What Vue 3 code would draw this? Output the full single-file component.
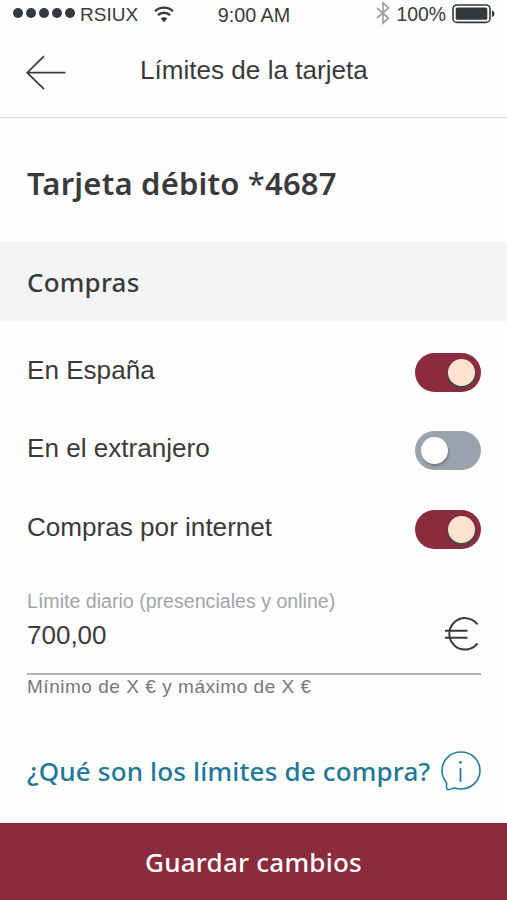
<script setup>
import { ref } from "vue";

const options = ref([
  { id: "spain", label: "En España", active: true },
  { id: "abroad", label: "En el extranjero", active: false },
  { id: "internet", label: "Compras por internet", active: true },
]);

const limit = ref("700,00");

const toggleOption = (option) => {
  option.active = !option.active;
};
</script>

<template>
  <div class="screen">
    <div class="status">
      <div class="status__left">
        <div class="status__signal">
          <span v-for="n in 5" :key="n" class="status__dot"></span>
        </div>
        <span class="status__carrier">RSIUX</span>
        <svg class="status__wifi" width="20" height="17" viewBox="0 0 20 17" fill="none">
          <path d="M1 5.2C6 .5 14 .5 19 5.2" stroke="#34373c" stroke-width="2.3" />
          <path d="M4 9.2C7.4 5.9 12.6 5.9 16 9.2" stroke="#34373c" stroke-width="2.3" />
          <path d="M6.7 12.6C8.5 10.8 11.5 10.8 13.3 12.6L10 16.3Z" fill="#34373c" />
        </svg>
      </div>
      <span class="status__time">9:00 AM</span>
      <div class="status__right">
        <svg class="status__bluetooth" width="14" height="24" viewBox="0 0 14 24" fill="none">
          <path
            d="M1 7L12.5 17L7 22V2L12.5 7L1 17"
            stroke="#a0a0a0"
            stroke-width="1.7"
          />
        </svg>
        <span class="status__percent">100%</span>
        <svg class="status__battery" width="43" height="20" viewBox="0 0 43 20" fill="none">
          <rect x="1" y="1" width="37" height="17.4" rx="4" stroke="#34373c" stroke-width="1.6" />
          <rect x="3.7" y="3.6" width="31.6" height="12.2" rx="1.5" fill="#34373c" />
          <path d="M40 6.5C43.2 7.3 43.2 12.1 40 12.9Z" fill="#34373c" />
        </svg>
      </div>
    </div>

    <header class="header">
      <svg class="header__back" width="40" height="36" viewBox="0 0 40 36" fill="none">
        <path
          d="M18 1.2L1.2 17.7L18 34.2M1.2 17.7H39.5"
          stroke="#3a3a3a"
          stroke-width="1.7"
        />
      </svg>
      <span class="header__title">Límites de la tarjeta</span>
    </header>

    <h1 class="card-title">
      <span>Tarjeta débito</span>
      <span class="card-title__star">*</span>
      <span>4687</span>
    </h1>

    <h2 class="section">Compras</h2>

    <div class="options">
      <div v-for="option in options" :key="option.id" class="option">
        <span class="option__label">{{ option.label }}</span>
        <div
          class="toggle"
          :class="{ active: option.active }"
          @click="toggleOption(option)"
        >
          <div class="toggle__knob"></div>
        </div>
      </div>
    </div>

    <div class="field">
      <div class="field__label">Límite diario (presenciales y online)</div>
      <div class="field__row">
        <span class="field__value">{{ limit }}</span>
        <svg class="field__euro" width="35" height="36" viewBox="0 0 35 36" fill="none">
          <path
            d="M32.5 8.3A15.7 15.7 0 1 0 32.5 27.3M0 14.7H22.5M0 21.7H22.5"
            stroke="#3a3a3a"
            stroke-width="2"
          />
        </svg>
      </div>
      <div class="field__hint">Mínimo de X € y máximo de X €</div>
    </div>

    <div class="help">
      <span class="help__text">¿Qué son los límites de compra?</span>
      <svg width="40" height="40" viewBox="0 0 40 40" fill="none">
        <path
          d="M5.5 31.5C2.5 28 1 24 1 19.5C1 9 9.5 1 20 1S39 9 39 19.5S30.5 38 20 38C17.5 38 15.5 37.5 13.5 37C11 37.2 9 39 6.8 38.6C4.8 38.2 5.7 35.5 5.5 31.5Z"
          stroke="#237d9c"
          stroke-width="1.6"
        />
        <path d="M19.5 17V31" stroke="#237d9c" stroke-width="1.8" />
        <circle cx="19.5" cy="11.3" r="1.4" fill="#237d9c" />
      </svg>
    </div>

    <button class="save">Guardar cambios</button>
  </div>
</template>

<style>
body {
  margin: 0;
  background: #fefefe;
}
</style>

<style scoped>
.screen {
  display: flex;
  flex-direction: column;
  height: 900px;
  color: #3a3a3a;
  font-family: "Liberation Sans", Arial, sans-serif;
  font-size: 26px;
  line-height: 30px;
  white-space: nowrap;
}

.status {
  display: grid;
  grid-template-columns: 1fr auto 1fr;
  height: 28px;
  box-sizing: border-box;
  padding: 0 12px 0 13px;
  font-size: 19.4px;
  line-height: 28px;
}

.status__left,
.status__right {
  display: flex;
  align-items: center;
}

.status__right {
  justify-content: flex-end;
}

.status__signal {
  display: flex;
  gap: 3px;
  padding-bottom: 3px;
}

.status__dot {
  width: 10px;
  height: 10px;
  border-radius: 50%;
  background: #34373c;
}

.status__carrier {
  margin-left: 5px;
  font-size: 19px;
}

.status__wifi {
  margin-left: 16px;
  margin-bottom: 1px;
}

.status__time {
  padding-top: 1px;
  font-size: 19.8px;
}

.status__bluetooth {
  margin-bottom: 3px;
}

.status__percent {
  margin: 0 6px;
  padding-bottom: 1px;
}

.status__battery {
  margin-bottom: 2px;
}

.header {
  display: flex;
  align-items: center;
  height: 90px;
  box-sizing: border-box;
  padding: 0 26px;
  border-bottom: 1px solid #d9dadb;
}

.header__back {
  margin-right: 74px;
}

.header__title {
  padding-bottom: 6px;
  font-size: 26.1px;
}

.card-title {
  display: flex;
  align-items: center;
  height: 124px;
  box-sizing: border-box;
  margin: 0;
  padding: 6px 27px 0;
  font-family: "Noto Sans", sans-serif;
  font-size: 31px;
  font-weight: 600;
  letter-spacing: 0.2px;
}

.card-title__star {
  margin-left: 8px;
  font-weight: 400;
}

.section {
  height: 79px;
  margin: 0;
  padding: 0 27px;
  background: #f3f4f6;
  font-family: "Noto Sans", sans-serif;
  font-size: 26px;
  font-weight: 500;
  line-height: 80px;
  letter-spacing: 0.2px;
}

.options {
  display: flex;
  flex-direction: column;
  gap: 39px;
  padding: 32px 26px 0 27px;
}

.option {
  display: flex;
  justify-content: space-between;
  height: 39.4px;
}

.option__label {
  line-height: 35px;
  font-size: 26.1px;
}

.toggle {
  display: flex;
  align-items: center;
  width: 66px;
  height: 39px;
  box-sizing: border-box;
  padding: 0 6px;
  border-radius: 20px;
  background: #9aa3ad;
  cursor: pointer;
}

.toggle__knob {
  width: 27px;
  height: 27px;
  border-radius: 50%;
  background: #fff;
  box-shadow: 1px 2px 2px rgba(60, 70, 80, 0.4);
}

.toggle.active {
  justify-content: flex-end;
  background: #8a2c3e;
}

.toggle.active .toggle__knob {
  background: #fde3cf;
  box-shadow: 0 2px 1px 1px #514343;
}

.field {
  padding: 41px 26px 0 27px;
}

.field__label {
  color: #a0a4ac;
  font-size: 19.6px;
  line-height: 22px;
}

.field__row {
  display: flex;
  justify-content: space-between;
  height: 63px;
  box-sizing: border-box;
  padding-top: 4px;
  border-bottom: 2px solid #b3b4b7;
}

.field__value {
  padding-top: 4px;
}

.field__euro {
  margin-right: 1px;
}

.field__hint {
  color: #77787b;
  font-size: 19px;
  line-height: 23px;
  letter-spacing: 0.53px;
}

.help {
  display: flex;
  align-items: center;
  justify-content: space-between;
  margin-top: 53px;
  padding: 0 26px 0 27px;
  color: #237895;
}

.help__text {
  font-family: "Noto Sans", sans-serif;
  font-weight: 500;
  letter-spacing: 0.17px;
}

.save {
  height: 77px;
  margin-top: auto;
  padding: 0;
  border: 0;
  background: #8a2c3e;
  color: #fff;
  font-family: "Noto Sans", sans-serif;
  font-size: 26px;
  font-weight: 500;
  letter-spacing: 0.25px;
  cursor: pointer;
}
</style>
